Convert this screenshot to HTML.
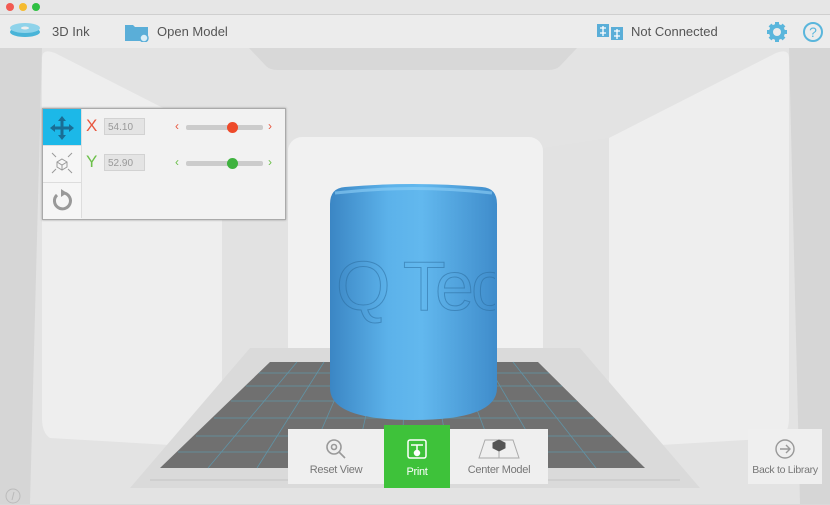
<!DOCTYPE html>
<html><head><style>
body{margin:0;width:830px;height:504px;overflow:hidden;font-family:"Liberation Sans",sans-serif;background:#d9d9d9;position:relative}
.abs{position:absolute}
.tb{top:0;left:0;width:830px;height:14px;background:#e6e6e6;border-bottom:1px solid #cfcfcf}
.dot{top:3px;width:8px;height:8px;border-radius:50%}
.bar{top:15px;left:0;width:830px;height:33px;background:#ececec}
.bar span{position:absolute;top:9px;font-size:13px;color:#555}
.btn{background:#efefef;text-align:center;font-size:11px;color:#777}
.btn div.l{position:absolute;bottom:8px;width:100%;text-align:center;letter-spacing:-0.3px}
</style></head><body>
<div class="abs tb"></div>
<div class="abs dot" style="left:6px;background:#f25a52"></div>
<div class="abs dot" style="left:19px;background:#f5bb2f"></div>
<div class="abs dot" style="left:32px;background:#2fc043"></div>
<svg class="abs" style="left:0;top:48px" width="830" height="456">
<rect width="830" height="456" fill="#d6d6d6"/>
<path d="M42 0 L789 0 L800 456 L30 456 Z" fill="#e3e3e3"/>
<path d="M249 0 L577 0 L560 18 Q556 22 548 22 L278 22 Q270 22 266 18 Z" fill="#d8d8d8"/>
<path d="M42 10 Q42 0 55 5 L222 90 L222 400 L50 390 Q42 385 42 370 Z" fill="#eeeeee"/>
<path d="M789 10 Q789 0 776 5 L609 90 L609 400 L780 390 Q789 385 789 370 Z" fill="#eeeeee"/>
<rect x="288" y="89" width="255" height="225" rx="14" fill="#f1f1f1"/>
<path d="M222 90 L288 100 L288 314 L222 330 Z" fill="#e2e2e2"/>
<path d="M609 90 L543 100 L543 314 L609 330 Z" fill="#e2e2e2"/>
<path d="M250 300 L580 300 L700 440 L130 440 Z" fill="#dadada"/>
<path d="M270 314 L538 314 L645 420 L160 420 Z" fill="#707070"/>
<g stroke="#5aa3bd" stroke-width="0.8" opacity="0.7">
<line x1="297" y1="314" x2="208" y2="420"/><line x1="324" y1="314" x2="257" y2="420"/><line x1="351" y1="314" x2="305" y2="420"/><line x1="378" y1="314" x2="354" y2="420"/><line x1="405" y1="314" x2="402" y2="420"/><line x1="432" y1="314" x2="451" y2="420"/><line x1="459" y1="314" x2="499" y2="420"/><line x1="486" y1="314" x2="548" y2="420"/><line x1="513" y1="314" x2="596" y2="420"/>
<line x1="259" y1="325" x2="549" y2="325"/><line x1="246" y1="338" x2="562" y2="338"/><line x1="231" y1="353" x2="577" y2="353"/><line x1="214" y1="370" x2="594" y2="370"/><line x1="196" y1="388" x2="612" y2="388"/><line x1="178" y1="404" x2="629" y2="404"/>
</g>
<line x1="150" y1="432" x2="680" y2="432" stroke="#c4c4c4"/>
<defs><linearGradient id="cg" x1="0" x2="1"><stop offset="0" stop-color="#3b86c4"/><stop offset="0.35" stop-color="#5cb2ea"/><stop offset="0.55" stop-color="#62b8ee"/><stop offset="1" stop-color="#3f8ccb"/></linearGradient>
<clipPath id="cc"><rect x="332" y="130" width="163" height="250"/></clipPath></defs>
<path d="M330 156 Q330 140 345 139 Q413 133 482 139 Q497 140 497 156 L497 340 Q497 372 413 372 Q330 372 330 340 Z" fill="url(#cg)"/>
<path d="M335 145 Q413 136 492 145" stroke="#8fd0f7" stroke-width="3" fill="none" opacity="0.6"/>
<text clip-path="url(#cc)" x="336" y="262" font-size="70" fill="none" stroke="#2c6d9f" stroke-width="1" font-family="Liberation Sans" textLength="170" opacity="0.55">Q Tec</text>
</svg>
<div class="abs bar"></div>
<svg class="abs" style="left:8px;top:21px" width="34" height="18"><ellipse cx="17" cy="11" rx="15" ry="5" fill="#49b4d8"/><ellipse cx="17" cy="7" rx="15" ry="5" fill="#8fd3ea"/><ellipse cx="17" cy="7" rx="4" ry="1.5" fill="#eee"/></svg>
<div class="bar abs" style="background:none;height:0"><span style="left:52px">3D Ink</span><span style="left:157px">Open Model</span><span style="left:631px">Not Connected</span></div>
<svg class="abs" style="left:124px;top:22px" width="26" height="20"><path d="M1 3h8l2 2h13v14H1z" fill="#5aaed8"/><circle cx="20" cy="16" r="4" fill="#d8eef8" stroke="#5aaed8" stroke-width="1.5"/></svg>
<svg class="abs" style="left:596px;top:23px" width="30" height="18"><rect x="1" y="1" width="12" height="13" fill="#5aaed8"/><rect x="15" y="4" width="12" height="13" fill="#5aaed8"/><path d="M4 5h6M4 10h6M7 3v10M18 8h6M18 13h6M21 6v10" stroke="#fff" stroke-width="1.3"/></svg>
<svg class="abs" style="left:766px;top:21px" width="22" height="22"><g fill="#5ab6dc"><circle cx="11" cy="11" r="8"/><g stroke="#5ab6dc" stroke-width="4"><path d="M11 1v20M1 11h20M4 4l14 14M18 4L4 18"/></g></g><circle cx="11" cy="11" r="4" fill="#ececec"/></svg>
<svg class="abs" style="left:802px;top:21px" width="22" height="22"><circle cx="11" cy="11" r="9" fill="none" stroke="#5ab6dc" stroke-width="2"/><text x="11" y="16" text-anchor="middle" font-size="14" fill="#5ab6dc" font-family="Liberation Sans">?</text></svg>
<div class="abs" style="left:42px;top:108px;width:242px;height:110px;background:#f2f2f2;border:1px solid #aaa;box-shadow:0 0 2px #999"></div>
<div class="abs" style="left:43px;top:109px;width:38px;height:36px;background:#1cb8e8"></div>
<div class="abs" style="left:43px;top:145px;width:38px;height:36px;background:#f6f6f6;border-top:1px solid #ddd"></div>
<div class="abs" style="left:43px;top:182px;width:38px;height:36px;background:#f6f6f6;border-top:1px solid #ddd"></div>
<div class="abs" style="left:81px;top:109px;width:1px;height:109px;background:#ddd"></div>
<svg class="abs" style="left:50px;top:116px" width="24" height="24"><path d="M12 2v20M2 12h20" stroke="#1a6d94" stroke-width="3"/><path d="M12 0l4 5h-8zM12 24l4-5h-8zM0 12l5 4v-8zM24 12l-5 4v-8z" fill="#1a6d94"/></svg>
<svg class="abs" style="left:50px;top:151px" width="24" height="24" stroke="#999" fill="none" stroke-width="1"><path d="M12 8l5 3v5l-5 3-5-3v-5z M7 11l5 3 5-3M12 14v5"/><path d="M2 2l4 4M22 2l-4 4M2 22l4-4M22 22l-4-4"/></svg>
<svg class="abs" style="left:51px;top:188px" width="22" height="24"><path d="M6 7 A8 8 0 1 0 13 5" fill="none" stroke="#999" stroke-width="3"/><path d="M10 1l6 4-6 4z" fill="#999"/></svg>
<div class="abs" style="left:86px;top:116px;font-size:17px;color:#e8573f">X</div>
<div class="abs" style="left:86px;top:152px;font-size:17px;color:#6cc04a">Y</div>
<div class="abs" style="left:104px;top:118px;width:41px;height:17px;background:#e4e4e4;border:1px solid #d2d2d2;font-size:10px;color:#999;line-height:17px;padding-left:3px;box-sizing:border-box">54.10</div>
<div class="abs" style="left:104px;top:154px;width:41px;height:17px;background:#e4e4e4;border:1px solid #d2d2d2;font-size:10px;color:#999;line-height:17px;padding-left:3px;box-sizing:border-box">52.90</div>
<div class="abs" style="left:175px;top:119px;font-size:12px;color:#e8573f">‹</div><div class="abs" style="left:268px;top:119px;font-size:12px;color:#e8573f">›</div>
<div class="abs" style="left:175px;top:155px;font-size:12px;color:#6cc04a">‹</div><div class="abs" style="left:268px;top:155px;font-size:12px;color:#6cc04a">›</div>
<div class="abs" style="left:186px;top:125px;width:77px;height:5px;background:#ccc;border-radius:2px"></div>
<div class="abs" style="left:186px;top:161px;width:77px;height:5px;background:#ccc;border-radius:2px"></div>
<div class="abs" style="left:227px;top:122px;width:11px;height:11px;border-radius:50%;background:#ee4a2a"></div>
<div class="abs" style="left:227px;top:158px;width:11px;height:11px;border-radius:50%;background:#3fb23f"></div>
<div class="abs btn" style="left:288px;top:429px;width:96px;height:55px"><svg style="margin-top:9px" width="22" height="22" fill="none" stroke="#999" stroke-width="1.6"><circle cx="9" cy="9" r="7"/><circle cx="9" cy="9" r="2.5"/><path d="M14 14l6 6"/></svg><div class="l">Reset View</div></div>
<div class="abs btn" style="left:384px;top:425px;width:66px;height:63px;background:#3ec23a;color:#fff"><svg style="margin-top:13px" width="22" height="22" fill="none" stroke="#fff" stroke-width="1.5"><rect x="2" y="2" width="18" height="18" rx="2"/><path d="M5 7h12M11 7v5"/><circle cx="11" cy="15" r="2.5" fill="#fff"/></svg><div class="l" style="bottom:10px">Print</div></div>
<div class="abs btn" style="left:450px;top:429px;width:98px;height:55px"><svg style="margin-top:7px" width="44" height="24" fill="none" stroke="#aaa"><path d="M8 4h28l6 18H2z"/><path d="M22 13v9"/><path d="M16 7l6-3 6 3v5l-6 3-6-3z" fill="#555" stroke="#555"/></svg><div class="l">Center Model</div></div>
<div class="abs btn" style="left:748px;top:429px;width:74px;height:55px"><svg style="margin-top:9px" width="22" height="22" fill="none" stroke="#999" stroke-width="1.4"><circle cx="11" cy="11" r="9"/><path d="M6 11h10M12 7l4 4-4 4"/></svg><div class="l" style="font-size:10.5px">Back to Library</div></div>
<svg class="abs" style="left:4px;top:487px" width="18" height="18"><circle cx="9" cy="9" r="7" fill="none" stroke="#bbb"/><path d="M10 5l-2 8" stroke="#bbb"/></svg>
</body></html>
